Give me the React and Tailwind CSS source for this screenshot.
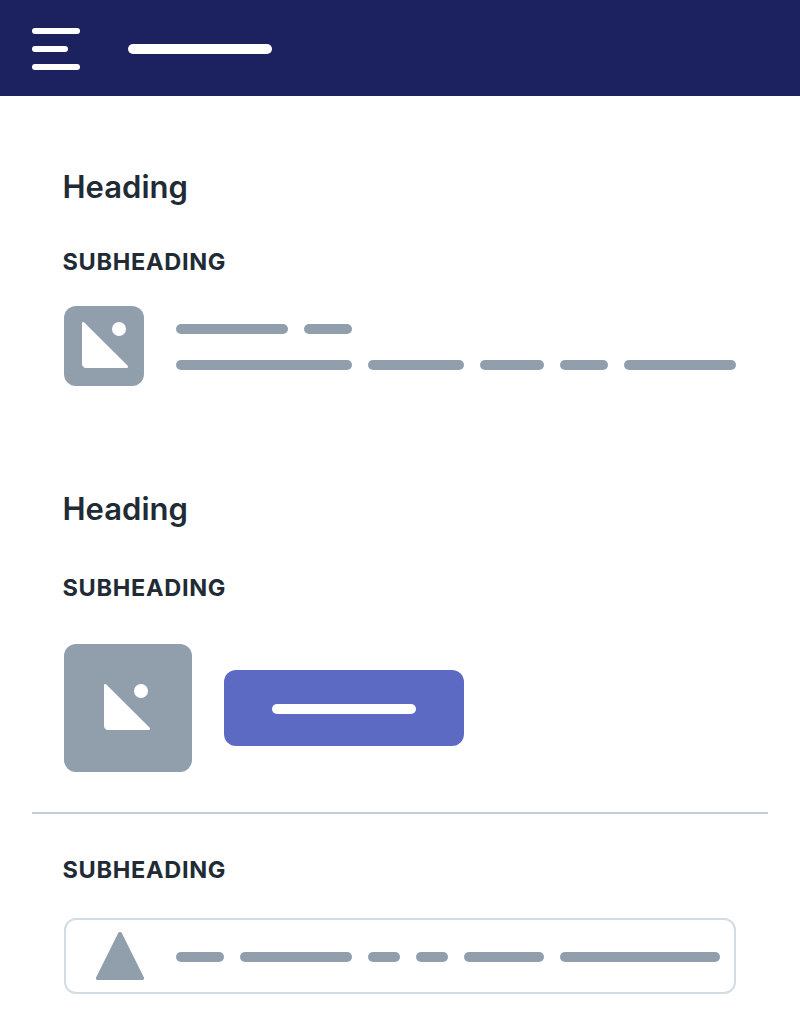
function Bar({ className }) {
  return <span className={`block h-2.5 shrink-0 rounded-full ${className}`} />;
}

function Bars({ widths }) {
  return (
    <div className="flex gap-4">
      {widths.map((w, i) => (
        <Bar key={i} className={`bg-[#919eab] ${w}`} />
      ))}
    </div>
  );
}

function ImageGlyph() {
  return (
    <svg width="48" height="48" viewBox="0 0 48 48" fill="#fff">
      <path d="M2 3.2C2 1.8 3.4 1.5 4.3 2.4L47.5 45.6C48.4 46.5 48 48 46.8 48H6C3.8 48 2 46.2 2 44Z" />
      <circle cx="39" cy="9" r="7" />
    </svg>
  );
}

function Heading() {
  return <h2 className="-ml-[1.5px] text-[31px] leading-10 font-semibold">Heading</h2>;
}

function Subheading() {
  return <h3 className="-ml-[1.5px] text-[23.5px] leading-8 font-[650] tracking-[0.7px]">SUBHEADING</h3>;
}

export default function App() {
  return (
    <div className="h-[1034px] w-[800px] overflow-hidden bg-white font-['Inter',sans-serif] text-[#212b36]">
      <header className="flex h-24 items-center gap-12 bg-[#1c2260] px-8 pt-0.5">
        <div className="flex w-12 flex-col gap-3">
          <span className="h-1.5 w-12 rounded-full bg-white" />
          <span className="h-1.5 w-9 rounded-full bg-white" />
          <span className="h-1.5 w-12 rounded-full bg-white" />
        </div>
        <Bar className="w-36 bg-white" />
      </header>
      <main>
        <section className="h-[322px] px-16 pt-[71px]">
          <Heading />
          <div className="mt-[39px]"><Subheading /></div>
          <div className="mt-7 flex gap-8">
            <div className="flex size-20 justify-center rounded-xl bg-[#919eab] pt-3.5">
              <ImageGlyph />
            </div>
            <div className="flex flex-col gap-[26px] pt-[18px]">
              <Bars widths={["w-28", "w-12"]} />
              <Bars widths={["w-44", "w-24", "w-16", "w-12", "w-28"]} />
            </div>
          </div>
        </section>
        <section className="h-[394px] px-16 pt-[71px]">
          <Heading />
          <div className="mt-[43px]"><Subheading /></div>
          <div className="mt-10 flex items-center gap-8">
            <div className="flex size-32 rounded-xl bg-[#919eab] pt-[38px] pl-[38px]">
              <ImageGlyph />
            </div>
            <button className="flex h-[76px] w-60 items-center justify-center rounded-xl bg-[#5c6ac4]">
              <Bar className="mt-0.5 w-36 bg-white" />
            </button>
          </div>
        </section>
        <hr className="mx-8 border-t-2 border-[#c4cdd8]" />
        <section className="px-16 pt-10">
          <Subheading />
          <div className="mt-8 flex h-[76px] items-center gap-8 rounded-xl border-2 border-[#d2dce4] pl-[30px]">
            <svg width="48" height="48" viewBox="0 0 48 48" fill="#919eab">
              <path d="M22.2 1.1C22.9-.4 25.1-.4 25.8 1.1L47.8 45.2C48.5 46.6 47.7 48 46.2 48H1.8C.3 48-.5 46.6.2 45.2Z" />
            </svg>
            <div className="pt-0.5">
              <Bars widths={["w-12", "w-28", "w-8", "w-8", "w-20", "w-40"]} />
            </div>
          </div>
        </section>
      </main>
    </div>
  );
}
